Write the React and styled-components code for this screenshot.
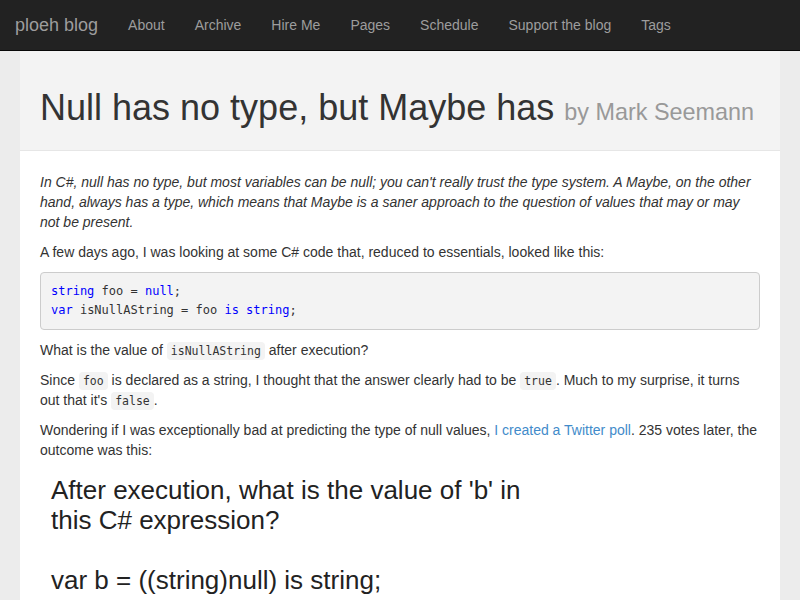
import React from "react"
import styled, { createGlobalStyle } from "styled-components"

const GlobalStyle = createGlobalStyle`
  html, body {
    margin: 0;
    padding: 0;
    background: #ececec;
    font-family: 'Liberation Sans', Arial, sans-serif;
    font-size: 14px;
    line-height: 20px;
    color: #333;
  }
`

const NavBar = styled.nav`
  display: flex;
  align-items: center;
  height: 50px;
  background: #222;
  border-bottom: 1px solid #080808;
`

const Brand = styled.a`
  padding: 15px;
  font-size: 18px;
  line-height: 20px;
  color: #9d9d9d;
  text-decoration: none;
`

const NavLink = styled.a`
  padding: 15px;
  font-size: 14px;
  line-height: 20px;
  color: #9d9d9d;
  text-decoration: none;
`

const Page = styled.div`
  width: 760px;
  margin: 0 20px;
  background: #fff;
  min-height: 549px;
`

const Header = styled.header`
  background: #f3f3f3;
  padding: 37px 20px 22px;
  border-bottom: 1px solid #e6e6e6;
`

const Title = styled.h1`
  margin: 0;
  font-size: 36px;
  line-height: 40px;
  font-weight: 400;
  color: #333;

  small {
    font-size: 65%;
    line-height: 1;
    color: #999;
  }
`

const Content = styled.article`
  padding: 21px 20px 20px;
`

const Para = styled.p`
  margin: 0 0 10px;
  font-style: ${p => (p.$italic ? "italic" : "normal")};
`

const Pre = styled.pre`
  margin: 0 0 10px;
  padding: 9px 10px 10px;
  background: #f3f3f3;
  border: 1px solid #ccc;
  border-radius: 4px;
  font-family: 'DejaVu Sans Mono', monospace;
  font-size: 12px;
  line-height: 18.5px;
  color: #333;
`

const Kw = styled.span`
  color: #0000ff;
`

const Code = styled.code`
  font-family: 'DejaVu Sans Mono', monospace;
  font-size: 11.5px;
  line-height: 1;
  padding: 2px 4px;
  background: #f3f3f3;
  border-radius: 4px;
  color: #333;
`

const Link = styled.a`
  color: #428bca;
  text-decoration: none;
`

const Tweet = styled.div`
  width: 480px;
  padding: 5px 11px;
  font-size: 26px;
  line-height: 30px;
  color: #222;
  white-space: pre-line;
`

const App = () => {
  return (
    <>
      <GlobalStyle />
      <NavBar>
        <Brand>ploeh blog</Brand>
        <NavLink>About</NavLink>
        <NavLink>Archive</NavLink>
        <NavLink>Hire Me</NavLink>
        <NavLink>Pages</NavLink>
        <NavLink>Schedule</NavLink>
        <NavLink>Support the blog</NavLink>
        <NavLink>Tags</NavLink>
      </NavBar>
      <Page>
        <Header>
          <Title>Null has no type, but Maybe has <small>by Mark Seemann</small></Title>
        </Header>
        <Content>
          <Para $italic>
            In C#, null has no type, but most variables can be null; you can't really trust the type system. A Maybe, on the other hand, always has a type, which means that Maybe is a saner approach to the question of values that may or may not be present.
          </Para>
          <Para>A few days ago, I was looking at some C# code that, reduced to essentials, looked like this:</Para>
          <Pre>
            <Kw>string</Kw> foo = <Kw>null</Kw>;{"\n"}
            <Kw>var</Kw> isNullAString = foo <Kw>is</Kw> <Kw>string</Kw>;
          </Pre>
          <Para>What is the value of <Code>isNullAString</Code> after execution?</Para>
          <Para>
            Since <Code>foo</Code> is declared as a string, I thought that the answer clearly had to be <Code>true</Code>. Much to my surprise, it turns out that it's <Code>false</Code>.
          </Para>
          <Para>
            Wondering if I was exceptionally bad at predicting the type of null values, <Link>I created a Twitter poll</Link>. 235 votes later, the outcome was this:
          </Para>
          <Tweet>{"After execution, what is the value of 'b' in this C# expression?\n\nvar b = ((string)null) is string;"}</Tweet>
        </Content>
      </Page>
    </>
  )
}

export default App
